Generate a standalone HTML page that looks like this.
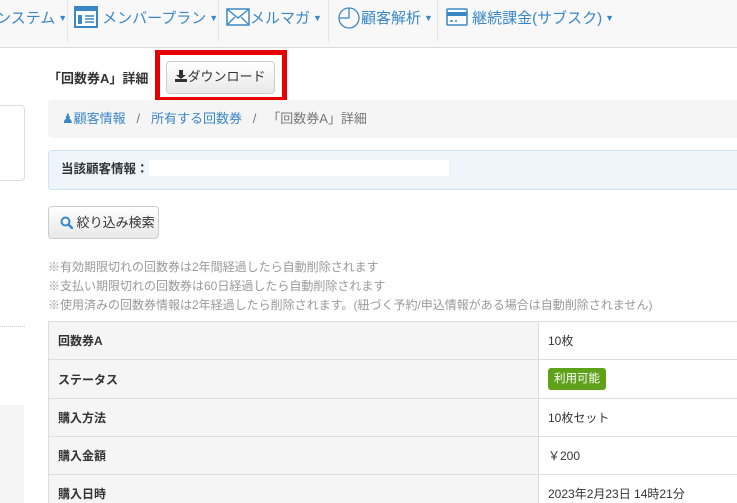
<!DOCTYPE html>
<html><head><meta charset="utf-8"><style>
*{box-sizing:border-box;margin:0;padding:0}
html,body{width:737px;height:503px;overflow:hidden}
body{background:#fff;font-family:"Liberation Sans","Noto Sans CJK JP",sans-serif;font-size:13px;color:#333;position:relative}
.nav{position:absolute;left:0;top:0;width:737px;height:48px;background:#f8f8f8;border-bottom:1px solid #ddd}
.ni{position:absolute;top:0;height:47px;line-height:36px;color:#3a87c8;font-size:15px;white-space:nowrap}
.sep{position:absolute;top:0;width:1px;height:42px;background:#e6e6e6}
.car{font-size:9px;vertical-align:2px;margin-left:3px}
.abs{position:absolute}
.btn{position:absolute;border:1px solid #ccc;border-radius:4px;background:linear-gradient(#fff,#e8e8e8);font-size:13px;color:#333}
table{position:absolute;left:48px;top:321px;width:700px;border-collapse:collapse}
td{border:1px solid #ddd;height:38px;padding:0 9px;font-size:12px}
td.l{background:#f5f5f5;width:490px;font-weight:bold}
.note{position:absolute;left:48px;color:#999;font-size:12px;white-space:nowrap}
</style></head><body>
<div class="nav">
<div class="ni" style="left:-4px">ンステム<span class="car">▼</span></div>
<div class="sep" style="left:67px"></div>
<div class="ni" style="left:74px"><svg width="24" height="22" viewBox="0 0 24 22" style="vertical-align:-5px"><rect x="1" y="1" width="22" height="20" fill="#fff" stroke="#3a87c8" stroke-width="2"/><rect x="1" y="1" width="22" height="4" fill="#3a87c8"/><rect x="4" y="9" width="4" height="9" fill="#3a87c8"/><path d="M11 10h9M11 13h9M11 16h9" stroke="#3a87c8" stroke-width="1.5"/></svg> メンバープラン<span class="car">▼</span></div>
<div class="sep" style="left:218px"></div>
<div class="ni" style="left:226px"><svg width="24" height="18" viewBox="0 0 24 18" style="vertical-align:-3px"><rect x="1" y="1" width="22" height="16" fill="#fff" stroke="#3a87c8" stroke-width="1.5"/><path d="M1 1l11 9 11-9M1 17l8-8M23 17l-8-8" stroke="#3a87c8" stroke-width="1.3" fill="none"/></svg>メルマガ<span class="car">▼</span></div>
<div class="sep" style="left:328px"></div>
<div class="ni" style="left:337px"><svg width="24" height="24" viewBox="0 0 24 24" style="vertical-align:-6px"><circle cx="12" cy="13" r="10" fill="none" stroke="#3a87c8" stroke-width="1.3"/><path d="M12 3v10H2" fill="none" stroke="#3a87c8" stroke-width="1.3"/></svg>顧客解析<span class="car">▼</span></div>
<div class="sep" style="left:437px"></div>
<div class="ni" style="left:446px"><svg width="22" height="18" viewBox="0 0 22 18" style="vertical-align:-3px"><rect x="1" y="1" width="20" height="16" rx="1" fill="#fff" stroke="#3a87c8" stroke-width="1.5"/><rect x="1" y="4" width="20" height="4" fill="#3a87c8"/><path d="M4 13h3M9 13h2" stroke="#3a87c8" stroke-width="1.5"/></svg> 継続課金(サブスク)<span class="car">▼</span></div>
</div>
<div class="abs" style="left:-5px;top:105px;width:30px;height:76px;border:1px solid #ddd;border-radius:4px"></div>
<div class="abs" style="left:0;top:326px;width:25px;border-top:1px dotted #ccc"></div>
<div class="abs" style="left:0;top:405px;width:24px;height:98px;background:#f5f5f5"></div>
<div class="abs" style="left:48px;top:68px;font-size:13px;font-weight:bold;color:#333">「回数券A」詳細</div>
<div class="btn" style="left:166px;top:61px;width:109px;height:33px;line-height:30px;text-align:center"><svg width="12" height="12" viewBox="0 0 12 12" style="vertical-align:-1px"><path d="M4 0h4v5h3L6 9 1 5h3z" fill="#333"/><rect x="0" y="9" width="12" height="3" fill="#333"/></svg>ダウンロード</div>
<div class="abs" style="left:155px;top:50px;width:132px;height:52px;border:5px solid #e60000"></div>
<div class="abs" style="left:48px;top:100px;width:700px;height:38px;background:#f5f5f5;border-radius:4px;line-height:37px;padding-left:14px;font-size:13px;color:#777"><span style="color:#3a87c8">&#9823;顧客情報</span>&nbsp;&nbsp;&nbsp;/&nbsp;&nbsp;&nbsp;<span style="color:#3a87c8">所有する回数券</span>&nbsp;&nbsp;&nbsp;/&nbsp;&nbsp;&nbsp;「回数券A」詳細</div>
<div class="abs" style="left:48px;top:150px;width:700px;height:40px;background:#eef6fc;border:1px solid #cfe4f3;border-radius:4px;line-height:37px;padding-left:12px;font-weight:bold;font-size:12.5px">当該顧客情報：<span style="display:inline-block;width:300px;height:16px;background:#fff;vertical-align:-3px"></span></div>
<div class="btn" style="left:48px;top:206px;width:111px;height:33px;line-height:31px;padding-left:11px"><svg width="13" height="13" viewBox="0 0 13 13" style="vertical-align:-2px"><circle cx="5.5" cy="5.5" r="4" fill="none" stroke="#3a87c8" stroke-width="2"/><path d="M8.5 8.5l3.5 3.5" stroke="#3a87c8" stroke-width="2.5" stroke-linecap="round"/></svg> 絞り込み検索</div>
<div class="note" style="top:258px">※有効期限切れの回数券は2年間経過したら自動削除されます</div>
<div class="note" style="top:277px">※支払い期限切れの回数券は60日経過したら自動削除されます</div>
<div class="note" style="top:296px">※使用済みの回数券情報は2年経過したら削除されます。(紐づく予約/申込情報がある場合は自動削除されません)</div>
<table>
<tr><td class="l">回数券A</td><td>10枚</td></tr>
<tr><td class="l" style="height:39px">ステータス</td><td><span style="display:inline-block;background:#5fa219;color:#fff;padding:0 6px;height:22px;line-height:22px;border-radius:3px;font-size:11.5px">利用可能</span></td></tr>
<tr><td class="l">購入方法</td><td>10枚セット</td></tr>
<tr><td class="l">購入金額</td><td>￥200</td></tr>
<tr><td class="l">購入日時</td><td>2023年2月23日 14時21分</td></tr>
</table>
</body></html>
